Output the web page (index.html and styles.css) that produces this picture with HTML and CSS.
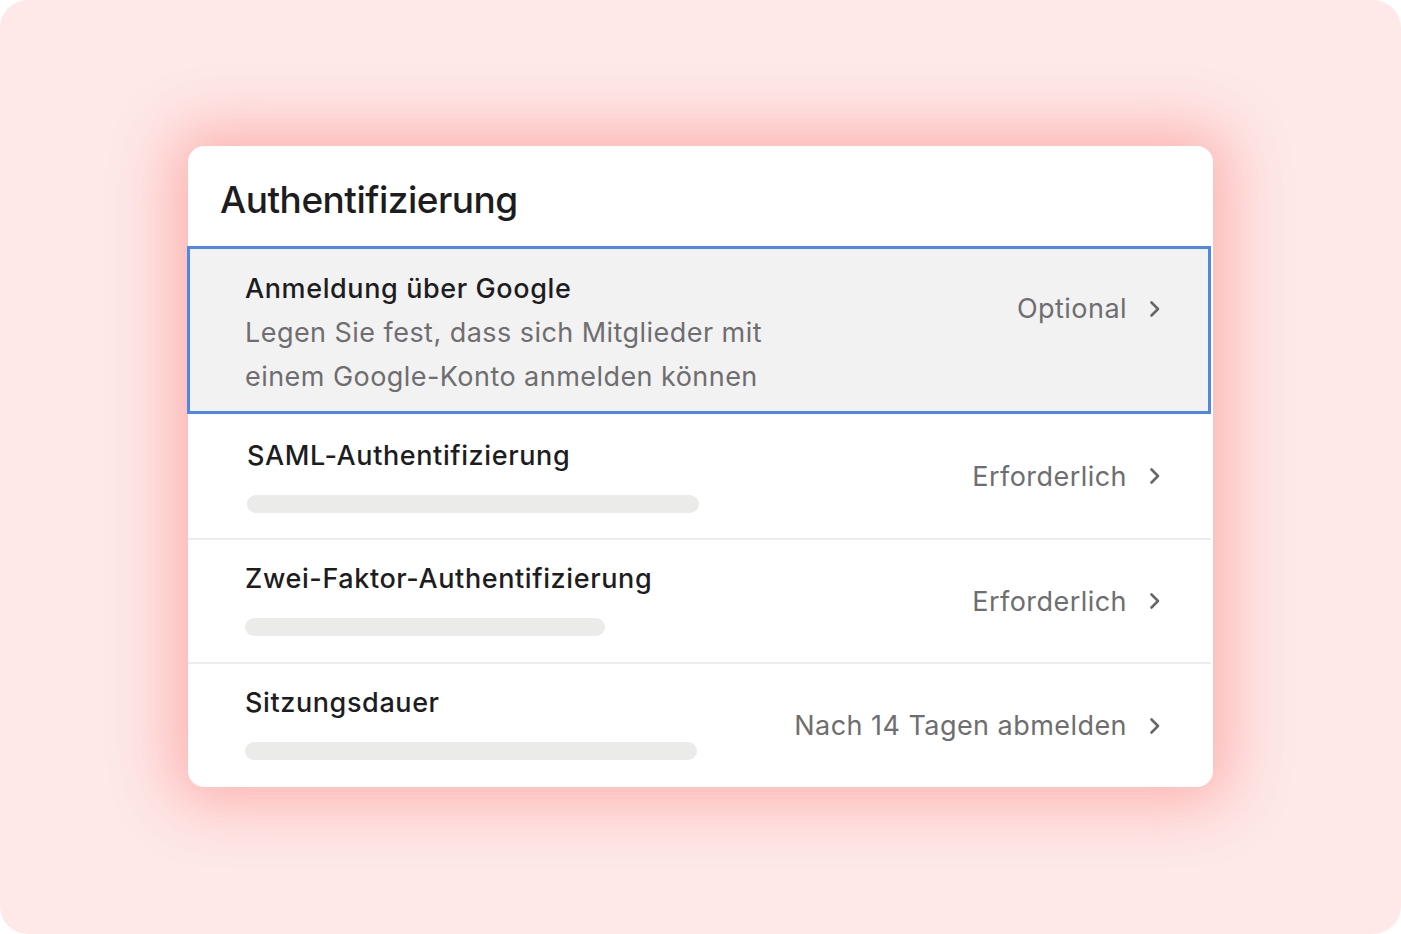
FILE: index.html
```html
<!DOCTYPE html>
<html lang="de">
<head>
<meta charset="utf-8">
<link rel="stylesheet" href="styles.css">
</head>
<body>
<div class="frame">
  <div class="card">
    <h1 class="title">Authentifizierung</h1>
    <div class="list">
      <div class="row selected">
        <div class="info">
          <div class="name">Anmeldung über Google</div>
          <div class="desc">Legen Sie fest, dass sich Mitglieder mit<br>einem Google-Konto anmelden können</div>
        </div>
        <div class="value top">Optional<svg class="chev" width="12" height="18" viewBox="0 0 12 18"><path d="M2.5 2.5 L9 9 L2.5 15.5" fill="none" stroke="#666666" stroke-width="2.6" stroke-linecap="round" stroke-linejoin="round"/></svg></div>
      </div>
      <div class="row r2">
        <div class="info">
          <div class="name">SAML-Authentifizierung</div>
          <div class="bar" style="width:452px"></div>
        </div>
        <div class="value">Erforderlich<svg class="chev" width="12" height="18" viewBox="0 0 12 18"><path d="M2.5 2.5 L9 9 L2.5 15.5" fill="none" stroke="#666666" stroke-width="2.6" stroke-linecap="round" stroke-linejoin="round"/></svg></div>
      </div>
      <div class="row">
        <div class="info">
          <div class="name">Zwei-Faktor-Authentifizierung</div>
          <div class="bar" style="width:360px"></div>
        </div>
        <div class="value">Erforderlich<svg class="chev" width="12" height="18" viewBox="0 0 12 18"><path d="M2.5 2.5 L9 9 L2.5 15.5" fill="none" stroke="#666666" stroke-width="2.6" stroke-linecap="round" stroke-linejoin="round"/></svg></div>
      </div>
      <div class="row last">
        <div class="info">
          <div class="name">Sitzungsdauer</div>
          <div class="bar" style="width:452px"></div>
        </div>
        <div class="value">Nach 14 Tagen abmelden<svg class="chev" width="12" height="18" viewBox="0 0 12 18"><path d="M2.5 2.5 L9 9 L2.5 15.5" fill="none" stroke="#666666" stroke-width="2.6" stroke-linecap="round" stroke-linejoin="round"/></svg></div>
      </div>
    </div>
  </div>
</div>
</body>
</html>
```

FILE: styles.css
```css
html, body {
  margin: 0;
  padding: 0;
  background: #ffffff;
}
body {
  font-family: Inter, "Noto Sans", sans-serif;
  color: #1d1d1f;
}
.frame {
  width: 1401px;
  height: 934px;
  box-sizing: border-box;
  border-radius: 28px;
  background: #fee8e8;
  padding: 146px 0 0 188px;
  overflow: hidden;
}
.card {
  width: 1025px;
  height: 641px;
  background: #ffffff;
  border-radius: 16px;
  box-shadow: 0 0 60px 16px rgba(252, 165, 160, 0.8);
  display: flex;
  flex-direction: column;
}
.title {
  margin: 0;
  height: 100px;
  box-sizing: border-box;
  padding: 30px 0 0 32px;
  font-size: 37px;
  font-weight: 500;
  letter-spacing: -0.5px;
  line-height: 48px;
  color: #1d1d1f;
}
.list {
  display: flex;
  flex-direction: column;
  margin-right: 2px;
}
.row {
  display: flex;
  justify-content: space-between;
  align-items: flex-start;
  height: 124px;
  box-sizing: border-box;
  padding: 0 50px 0 57px;
  border-bottom: 2px solid #ececec;
}
.row.r2 {
  height: 126px;
  padding-left: 59px;
}
.row.last {
  height: 123px;
  border-bottom: none;
}
.row.selected {
  height: 168px;
  margin-left: -1px;
  background: #f3f2f2;
  border: 3px solid #4e87ea;
  padding: 0 47px 0 55px;
}
.info {
  display: flex;
  flex-direction: column;
  padding-top: 21px;
}
.r2 .info {
  padding-top: 24px;
}
.selected .info {
  padding-top: 22px;
}
.name {
  font-size: 27px;
  line-height: 36px;
  font-weight: 500;
  letter-spacing: 0.6px;
  color: #1d1d1f;
}
.desc {
  font-size: 27px;
  line-height: 44px;
  color: #6e6e70;
  letter-spacing: 0.45px;
  margin-top: 4px;
}
.bar {
  height: 18px;
  border-radius: 9px;
  background: #ebebea;
  margin-top: 21px;
}
.value {
  align-self: center;
  display: flex;
  align-items: center;
  gap: 22px;
  font-size: 27px;
  color: #6e6e70;
  letter-spacing: 0.45px;
}
.value.top {
  align-self: flex-start;
  margin-top: 43px;
}
.chev {
  display: block;
}
```
